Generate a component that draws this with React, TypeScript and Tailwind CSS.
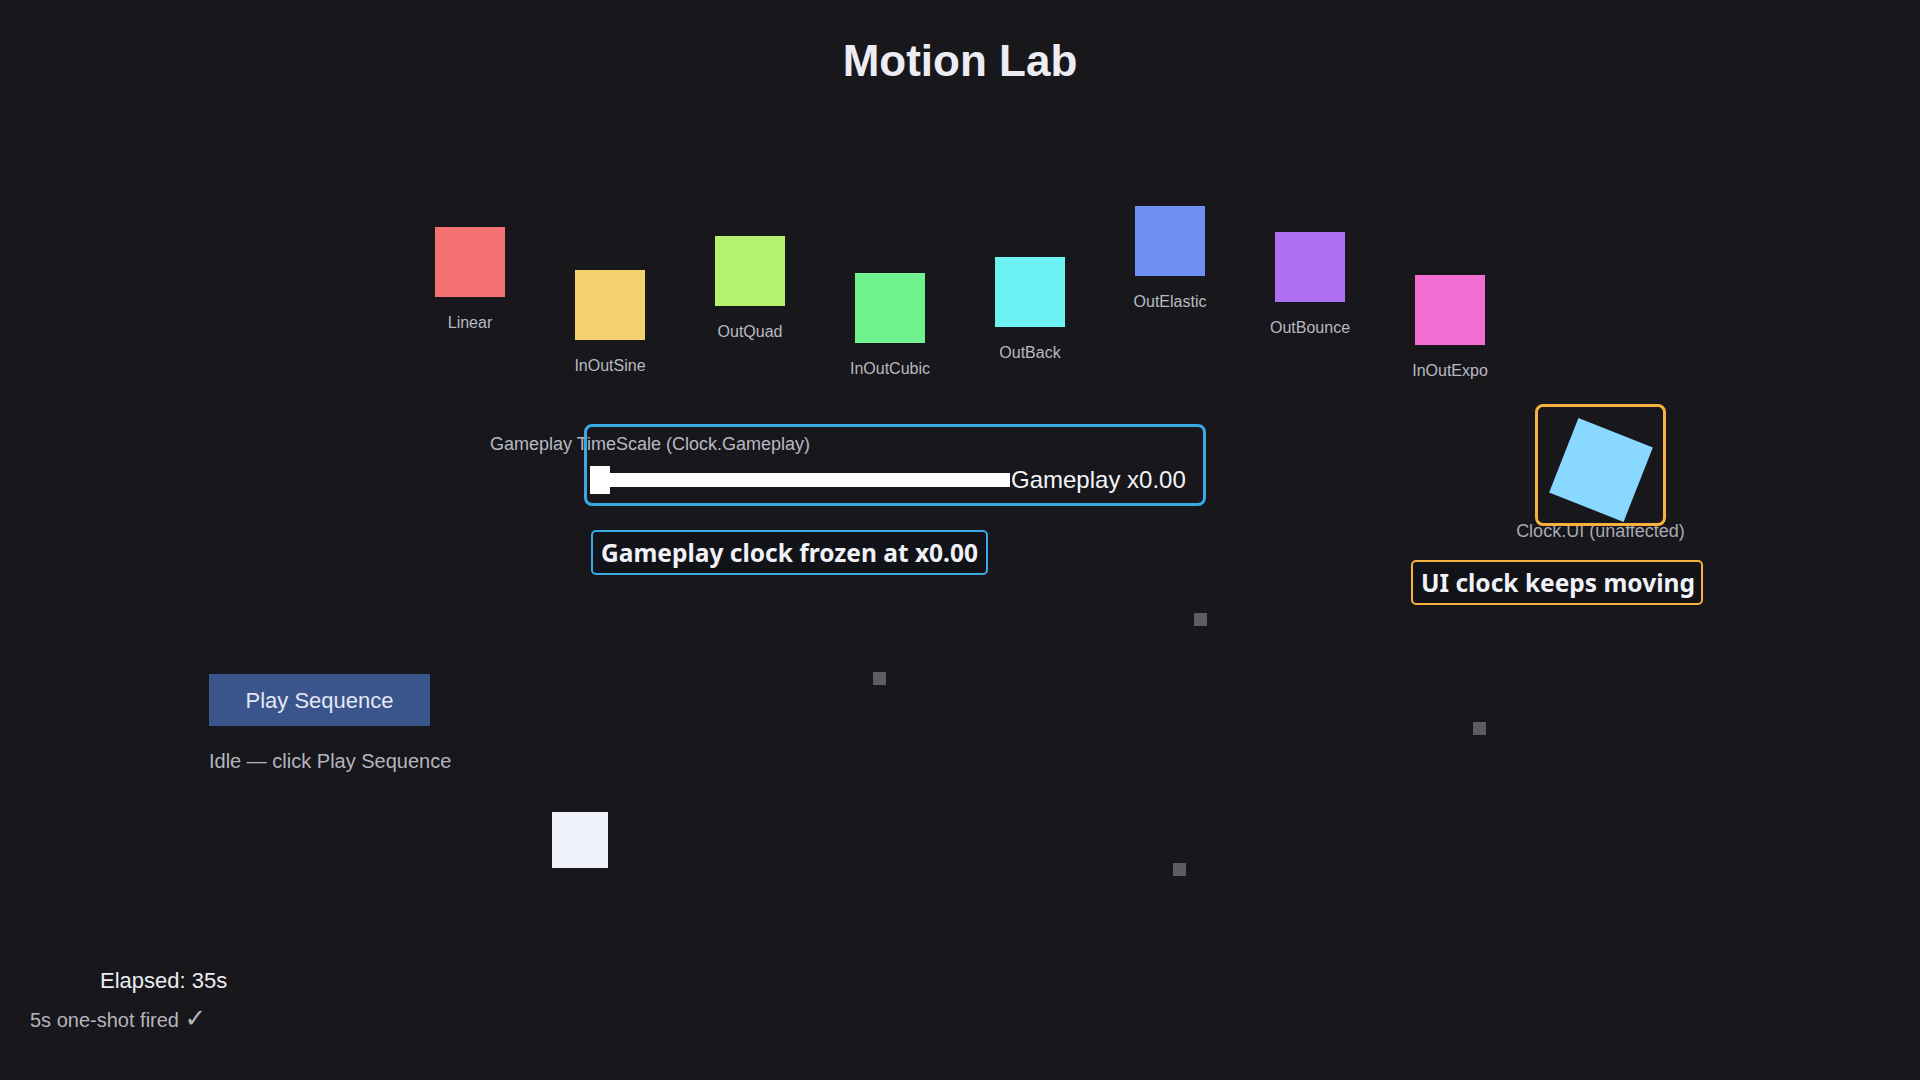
import React from 'react';

// easing preview squares — offsets are where each tween currently sits
const easings = [
  { name: 'Linear', color: 'bg-[#f47171]', offset: 'mt-[21px]' },
  { name: 'InOutSine', color: 'bg-[#f2d16e]', offset: 'mt-[64px]' },
  { name: 'OutQuad', color: 'bg-[#b3f26e]', offset: 'mt-[30px]' },
  { name: 'InOutCubic', color: 'bg-[#6ff28d]', offset: 'mt-[67px]' },
  { name: 'OutBack', color: 'bg-[#6cf2f2]', offset: 'mt-[51px]' },
  { name: 'OutElastic', color: 'bg-[#6f90f2]', offset: 'mt-0' },
  { name: 'OutBounce', color: 'bg-[#b06ef2]', offset: 'mt-[26px]' },
  { name: 'InOutExpo', color: 'bg-[#f36dd3]', offset: 'mt-[69px]' },
];

// stray particles on the canvas
const particles = [
  'left-[1194px] top-[613px]',
  'left-[873px] top-[672px]',
  'left-[1473px] top-[722px]',
  'left-[1173px] top-[863px]',
];

function EasingRow() {
  return (
    <div className="flex justify-center gap-[70px] h-[198px] mt-[123px]">
      {easings.map((e) => (
        <div key={e.name} className={`flex flex-col items-center w-[70px] ${e.offset}`}>
          <div className={`w-[70px] h-[70px] ${e.color}`} />
          <span className="mt-[16px] text-[16px] leading-5 text-[#b9b9c2] whitespace-nowrap">{e.name}</span>
        </div>
      ))}
    </div>
  );
}

function TimeScalePanel() {
  return (
    <div className="relative w-[700px] ml-[490px] mt-[29px]">
      <div className="text-[18px] leading-[22px] text-[#b9b9c2] whitespace-nowrap">
        Gameplay TimeScale (Clock.Gameplay)
      </div>
      <div className="flex items-center h-[28px] mt-[11px] ml-[100px]">
        <div className="w-5 h-[28px] bg-white" />
        <div className="w-[400px] h-[14px] bg-white" />
        <span className="ml-px text-[24px] leading-[28px] text-[#f4f4f8] whitespace-nowrap">Gameplay x0.00</span>
      </div>
      <div className="mt-[36px] ml-[101px] inline-flex border-2 border-[#3aa9e6] rounded-[5px] bg-[#111318] px-[8px] py-[5px]">
        <span className="font-['Noto_Sans',sans-serif] font-bold text-[24.5px] leading-[31px] text-[#f0f2f8] whitespace-nowrap">
          Gameplay clock frozen at x0.00
        </span>
      </div>
      {/* focus highlight over the slider */}
      <div className="absolute left-[94px] top-[-9px] w-[622px] h-[82px] border-[3px] border-[#3aa9e6] rounded-lg pointer-events-none" />
    </div>
  );
}

function UiClockPanel() {
  return (
    <div className="w-[292px] ml-[221px]">
      <div className="relative flex flex-col items-center w-[131px] ml-[124px]">
        <div className="flex items-center justify-center w-full h-[122px]">
          <div className="w-20 h-20 bg-[#89d8ff] rotate-[21.5deg] translate-y-[5px]" />
        </div>
        <span className="-mt-[6px] text-[18px] leading-[22px] text-[#a9a9b2] whitespace-nowrap">Clock.UI (unaffected)</span>
        <div className="absolute left-0 top-0 w-[131px] h-[122px] border-[3px] border-[#f8b03e] rounded-lg pointer-events-none" />
      </div>
      <div className="mt-[18px] flex border-2 border-[#f8b03e] rounded-[5px] bg-[#111318] px-[8px] py-[5px]">
        <span className="font-['Noto_Sans',sans-serif] font-bold text-[24.5px] leading-[31px] text-[#f0f2f8] whitespace-nowrap">
          UI clock keeps moving
        </span>
      </div>
    </div>
  );
}

export default function App() {
  return (
    <div className="relative min-h-screen w-full overflow-hidden bg-[#17171c] font-['Liberation_Sans',Arial,sans-serif]">
      <h1 className="pt-[39px] text-center text-[44px] leading-none font-bold text-[#ececf2]">Motion Lab</h1>

      <EasingRow />

      <div className="flex items-start h-[270px]">
        <TimeScalePanel />
        <UiClockPanel />
      </div>

      <div className="ml-[209px]">
        <button className="flex items-center justify-center w-[221px] h-[52px] bg-[#3a548c] text-[22px] text-[#e4e8f4]">
          Play Sequence
        </button>
        <p className="mt-[23px] text-[20px] leading-6 text-[#b5b5be]">Idle — click Play Sequence</p>
      </div>

      <div className="mt-[195px]">
        <p className="ml-[100px] text-[22px] leading-[26px] text-[#ececf2]">Elapsed: 35s</p>
        <p className="mt-[14px] ml-[30px] text-[20px] leading-6 text-[#b5b5be]">
          5s one-shot fired <span className="font-['DejaVu_Sans',sans-serif] text-[26px] leading-[0px]">✓</span>
        </p>
      </div>

      {/* sprites on the canvas */}
      <div className="absolute left-[552px] top-[812px] w-[56px] h-[56px] bg-[#f0f2fa]" />
      {particles.map((p) => (
        <div key={p} className={`absolute w-[13px] h-[13px] bg-[#5c5c62] ${p}`} />
      ))}
    </div>
  );
}
